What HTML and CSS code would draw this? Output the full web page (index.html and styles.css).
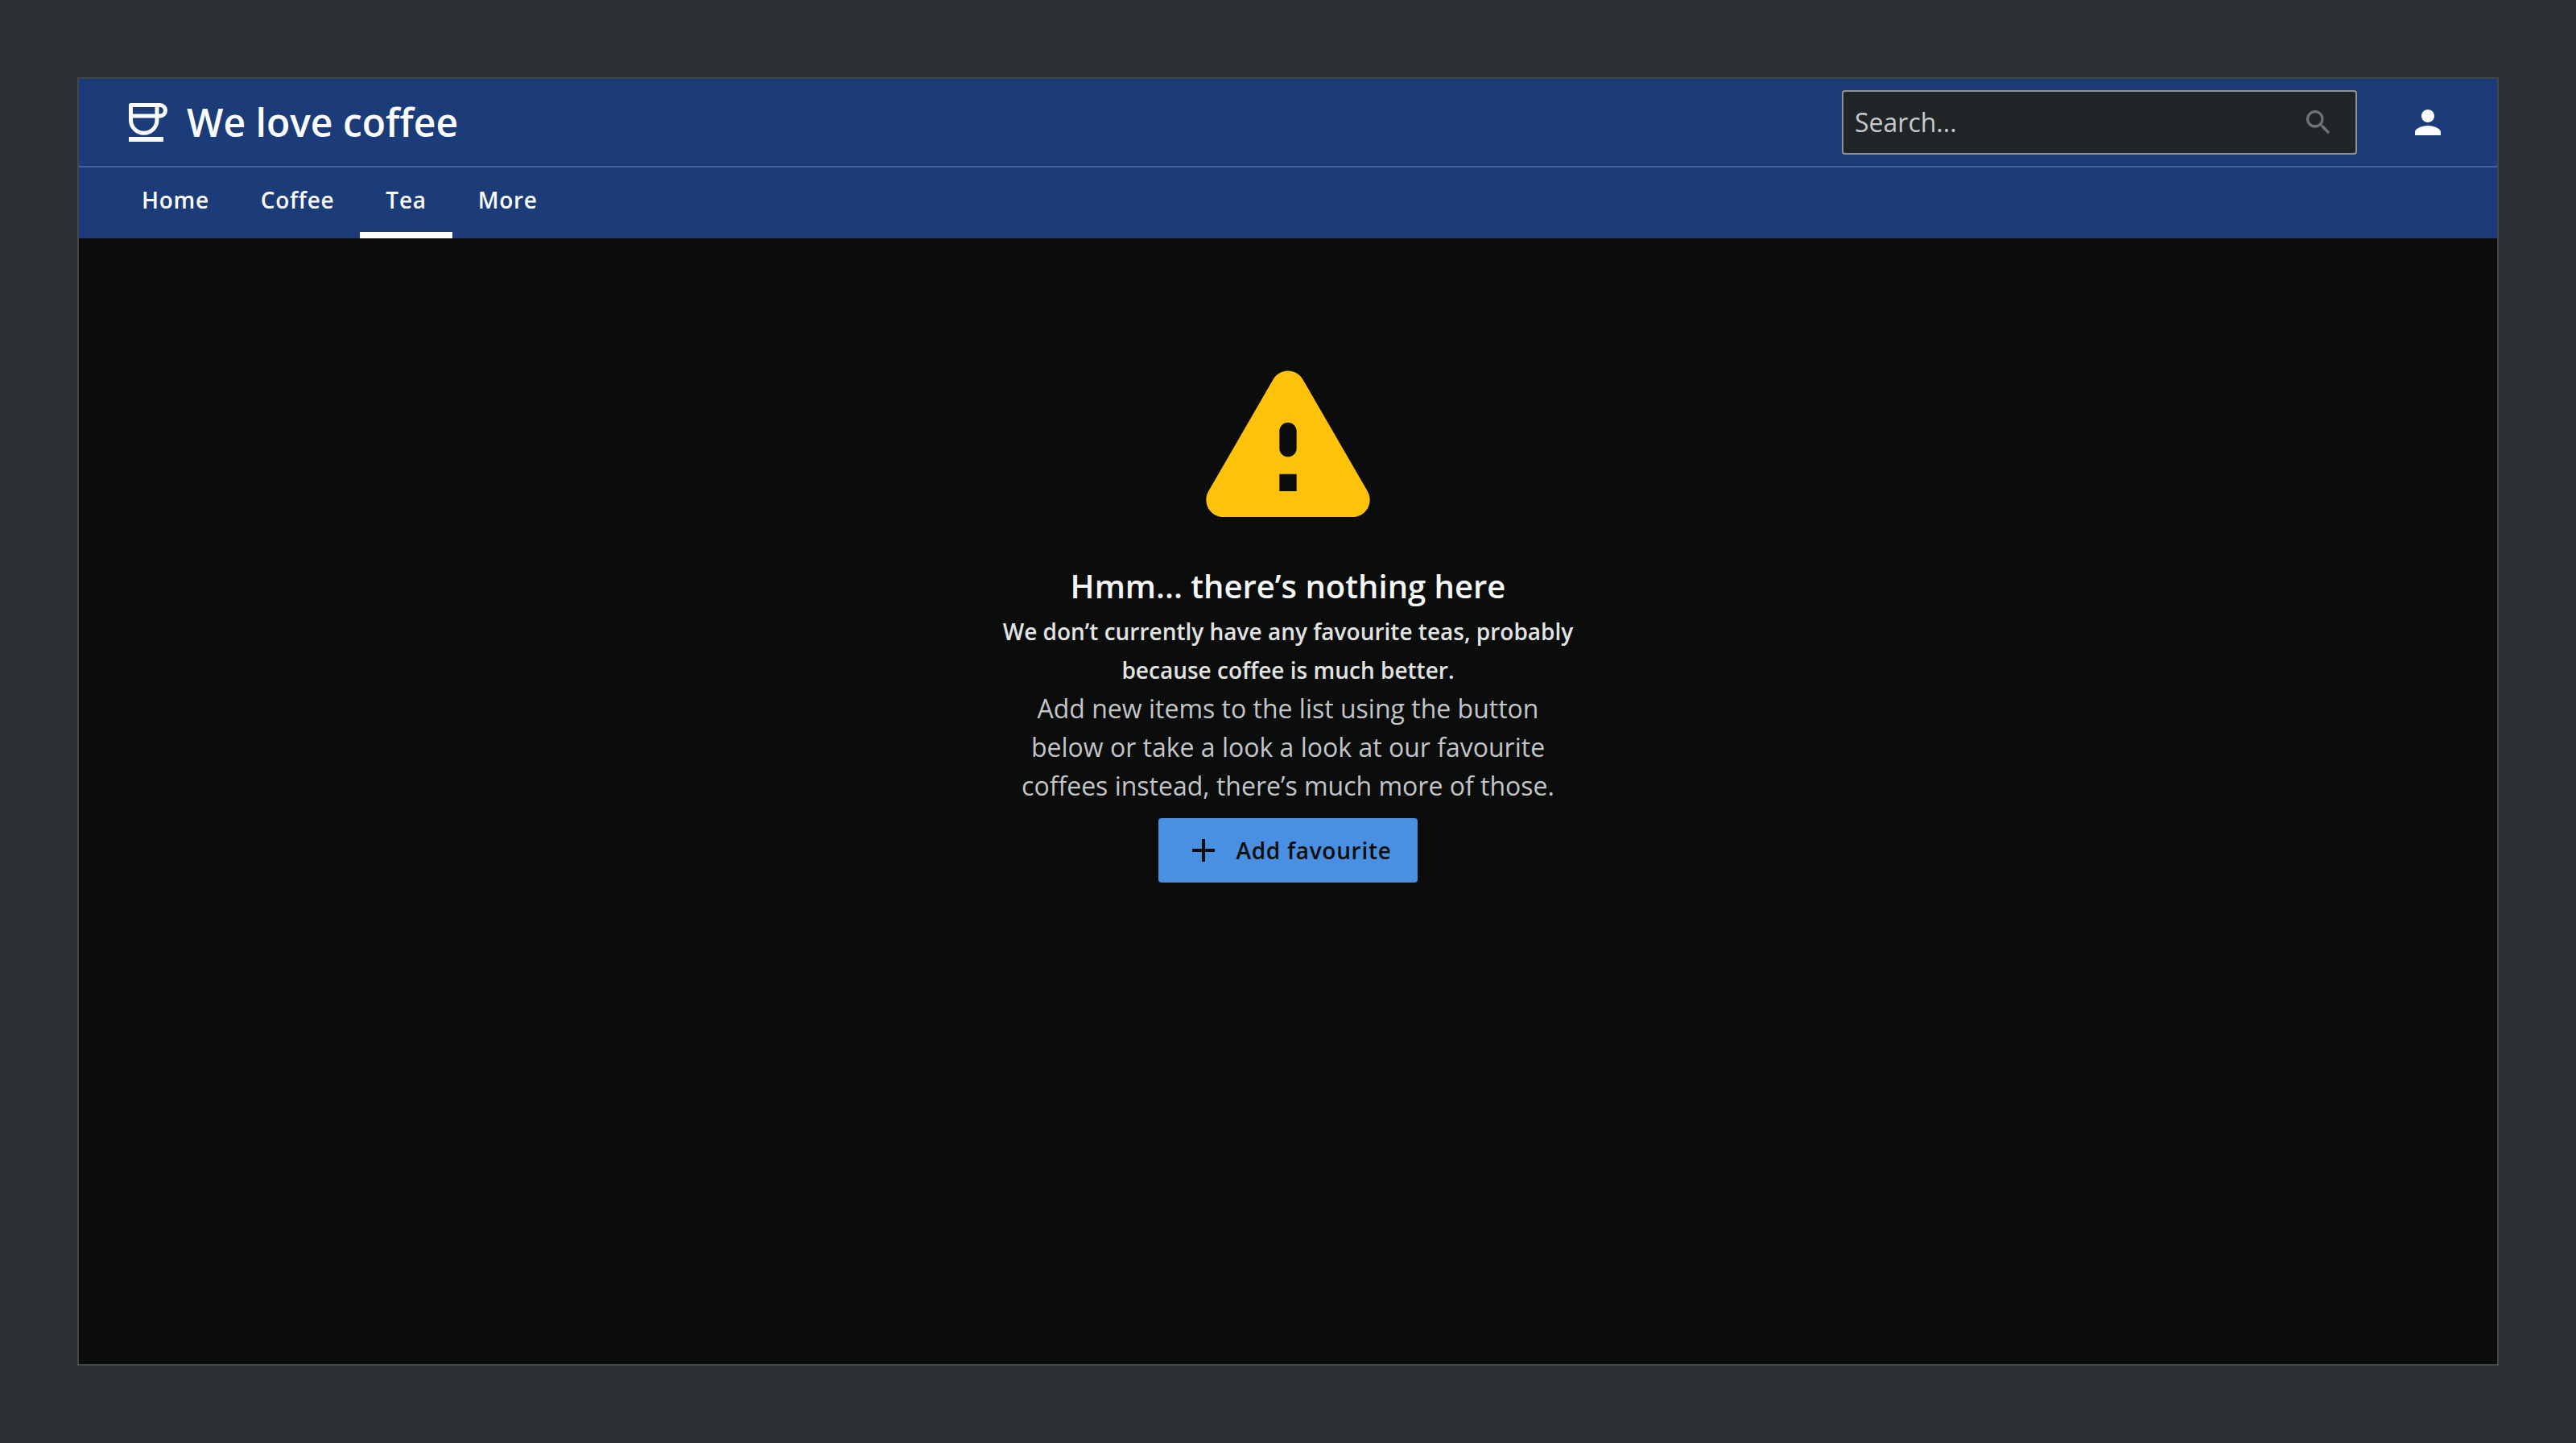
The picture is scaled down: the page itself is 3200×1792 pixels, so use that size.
FILE: index.html
```html
<!DOCTYPE html>
<html lang="en">
<head>
<meta charset="utf-8">
<meta name="viewport" content="width=device-width, initial-scale=1">
<title>We love coffee</title>
<link rel="stylesheet" href="styles.css">
</head>
<body>
<div class="app">
  <header class="top-bar">
    <a class="brand" href="#">
      <svg class="brand-icon" viewBox="0 0 48 48" aria-hidden="true">
        <path fill="none" stroke="currentColor" stroke-width="5" stroke-linejoin="round" d="M2.500 2.500H35V21A16.250 16.250 0 0 1 2.500 21ZM35 2.500H38.750A6.750 6.750 0 0 1 38.750 16H2.500"/>
        <path fill="currentColor" d="M0 42H43V48H0z"/>
      </svg>
      <span>We love coffee</span>
    </a>
    <div class="tools">
      <form class="search" role="search">
        <input class="search-input" type="search" placeholder="Search..." aria-label="Search">
        <button class="search-button" type="button" aria-label="Submit search">
          <svg class="icon icon-small" viewBox="0 0 24 24" aria-hidden="true"><path fill="currentColor" d="M15.500 14h-.79l-.28-.27A6.471 6.471 0 0 0 16 9.500 6.500 6.500 0 1 0 9.500 16c1.610 0 3.090-.59 4.230-1.570l.27.28v.79l5 4.990L20.490 19l-4.990-5zm-6 0C7.010 14 5 11.990 5 9.500S7.010 5 9.500 5 14 7.010 14 9.500 11.990 14 9.500 14z"/></svg>
        </button>
      </form>
      <button class="account" type="button" aria-label="Account">
        <svg class="icon" viewBox="0 0 24 24" aria-hidden="true"><path fill="currentColor" d="M12 12c2.210 0 4-1.790 4-4s-1.790-4-4-4-4 1.790-4 4 1.790 4 4 4zm0 2c-2.670 0-8 1.340-8 4v2h16v-2c0-2.660-5.330-4-8-4z"/></svg>
      </button>
    </div>
  </header>
  <nav class="tabs" aria-label="Main">
    <a class="tab" href="#">Home</a>
    <a class="tab" href="#">Coffee</a>
    <a class="tab tab-active" href="#" aria-current="page">Tea</a>
    <a class="tab" href="#">More</a>
  </nav>
  <main class="empty">
    <svg class="empty-icon" viewBox="0 0 24 24" aria-hidden="true"><path fill="currentColor" d="M4.470 21h15.060c1.540 0 2.500-1.670 1.730-3L13.730 4.990c-.77-1.330-2.690-1.330-3.460 0L2.740 18c-.77 1.330.19 3 1.730 3zM12 14c-.55 0-1-.45-1-1v-2c0-.55.45-1 1-1s1 .45 1 1v2c0 .55-.45 1-1 1zm1 4h-2v-2h2v2z"/></svg>
    <h1 class="empty-title">Hmm... there’s nothing here</h1>
    <h2 class="empty-subtitle">We don’t currently have any favourite teas, probably because coffee is much better.</h2>
    <p class="empty-text">Add new items to the list using the button below or take a look a look at our favourite coffees instead, there’s much more of those.</p>
    <button class="primary" type="button">
      <svg class="icon" viewBox="0 0 24 24" aria-hidden="true"><path fill="currentColor" d="M19 13h-6v6h-2v-6H5v-2h6V5h2v6h6z"/></svg>
      <span>Add favourite</span>
    </button>
  </main>
</div>
</body>
</html>
```
FILE: styles.css
```css
* { box-sizing: border-box; }

body {
  display: flex;
  min-height: 100vh;
  margin: 0;
  padding: 96px;
  background: #2d3034;
  color: #fafbfb;
  font-family: "Open Sans", sans-serif;
  font-size: 32px;
  line-height: 48px;
}

button, input { font: inherit; }

.app {
  display: flex;
  flex: 1;
  flex-direction: column;
  border: 2px solid #43474b;
  background: #0a0d0b;
}

.top-bar {
  display: flex;
  align-items: center;
  justify-content: space-between;
  padding: 14px 62px;
  border-bottom: 2px solid #46649b;
  background: #1c3b79;
}

.brand {
  display: flex;
  align-items: center;
  gap: 24px;
  color: inherit;
  font-size: 48px;
  font-weight: 600;
  line-height: 64px;
  text-decoration: none;
}

.brand-icon { width: 48px; height: 48px; }

.icon { display: block; width: 48px; height: 48px; }

.icon-small { width: 40px; height: 40px; }

.tools { display: flex; align-items: center; gap: 64px; }

.search {
  display: flex;
  align-items: center;
  width: 640px;
  height: 80px;
  padding: 0 26px 0 14px;
  border: 2px solid #8f9294;
  border-radius: 4px;
  background: #212528;
}

.search-input {
  flex: 1;
  min-width: 0;
  padding: 0;
  border: 0;
  outline: 0;
  background: none;
  color: inherit;
}

.search-input::placeholder { color: #c6c9ca; opacity: 1; }

.search-button, .account {
  padding: 0;
  border: 0;
  background: none;
  color: #6c757d;
}

.account { color: inherit; }

.tabs {
  display: flex;
  padding: 0 46px;
  background: #1c3b79;
}

.tab {
  padding: 20px 32px;
  border-bottom: 8px solid transparent;
  color: inherit;
  font-size: 28px;
  font-weight: 600;
  line-height: 40px;
  letter-spacing: 0.025em;
  text-decoration: none;
}

.tab-active { border-color: #fafbfb; }

.empty {
  display: flex;
  flex-direction: column;
  align-items: center;
  width: 100%;
  max-width: 720px;
  margin: 0 auto;
  padding-top: 122px;
  text-align: center;
}

.empty-icon { width: 256px; height: 256px; color: #ffc20a; }

.empty-title {
  margin: 22px 0 0;
  color: #f5f6f6;
  font-size: 40px;
  font-weight: 600;
  line-height: 64px;
}

.empty-subtitle {
  margin: 0;
  color: #e2e4e4;
  font-size: 28px;
  font-weight: 600;
  line-height: 48px;
}

.empty-text {
  max-width: 680px;
  margin: 0;
  color: #c3c5c9;
}

.primary {
  display: flex;
  align-items: center;
  gap: 16px;
  margin-top: 16px;
  padding: 16px 32px;
  border: 0;
  border-radius: 4px;
  background: #4990e2;
  color: #0a0d0b;
  font-size: 28px;
  font-weight: 600;
  letter-spacing: 0.025em;
}
```
